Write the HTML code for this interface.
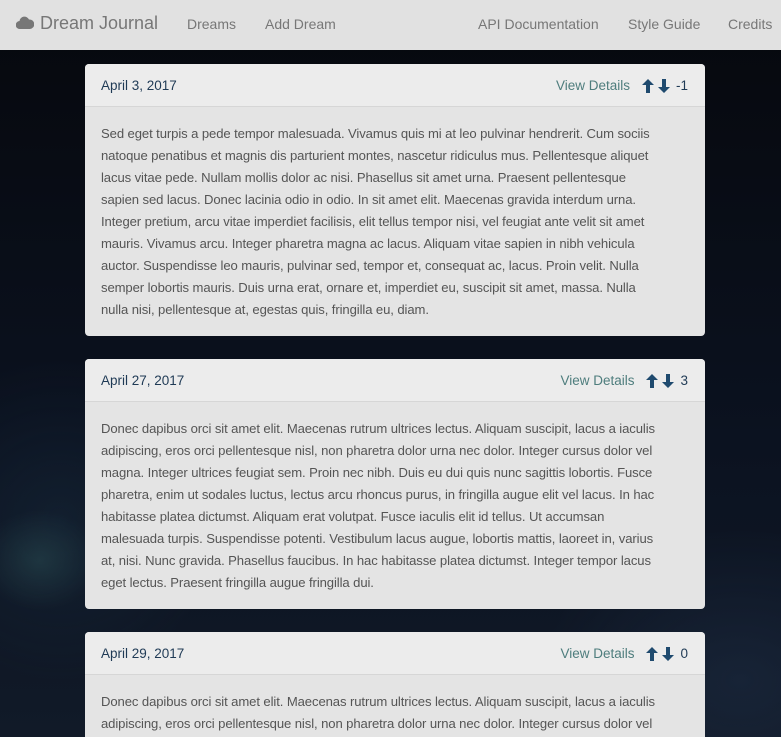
<!DOCTYPE html>
<html><head><meta charset="utf-8"><style>
*{margin:0;padding:0;box-sizing:border-box}
html,body{width:781px;height:737px;overflow:hidden}
body{font-family:"Liberation Sans",sans-serif;
background:radial-gradient(ellipse 60px 50px at 40px 560px,rgba(60,110,110,.3),transparent),
radial-gradient(ellipse 160px 160px at 60px 520px,rgba(30,55,75,.3),transparent),
radial-gradient(ellipse 200px 150px at 740px 680px,rgba(40,60,90,.3),transparent),
linear-gradient(#06080d,#0b1220 60%,#111a28);position:relative}
nav{position:absolute;top:0;left:0;width:781px;height:50px;background:#e1e1e1;color:#777;font-size:14px}
nav span{position:absolute;top:16px}
.brand{font-size:18px;top:13px!important;left:40px}
.card{position:absolute;left:85px;width:620px;background:#e4e4e4;border-radius:4px;overflow:hidden}
.hd{height:43px;background:#ececec;border-bottom:1px solid #d6d6d6;position:relative;font-size:13.5px;color:#1f3a55}
.hd .d{position:absolute;left:16px;top:14px}
.hd .r{position:absolute;right:17px;top:14px;color:#1f3a55;display:flex;align-items:center}
.hd .v{color:#4e7d7d;margin-right:12px}
.bd{padding:16px 16px 14px;font-size:13.1px;line-height:22px;color:#555;white-space:nowrap;letter-spacing:-0.1px}
svg.a{margin-right:6px}
</style></head><body>
<nav>
<svg style="position:absolute;left:16px;top:16px" width="18" height="13" viewBox="0 0 18 13"><path d="M4 13a4 4 0 0 1-.5-8A5 5 0 0 1 13 3.5a4.5 4.5 0 0 1 1 9.5z" fill="#777"/></svg>
<span class="brand">Dream Journal</span>
<span style="left:187px">Dreams</span><span style="left:265px">Add Dream</span>
<span style="left:478px">API Documentation</span><span style="left:628px">Style Guide</span><span style="left:728px">Credits</span>
</nav>
<div class="card" style="top:64px;height:272px"><div class="hd"><span class="d">April 3, 2017</span><span class="r"><span class="v">View Details</span><svg class="a" width="28" height="14" viewBox="0 0 28 14"><path d="M6 0L12 6H8V14H4V6H0z M22 14L28 8H24V0H20V8H16z" fill="#1f4a6e"/></svg>-1</span></div>
<div class="bd">Sed eget turpis a pede tempor malesuada. Vivamus quis mi at leo pulvinar hendrerit. Cum sociis<br>natoque penatibus et magnis dis parturient montes, nascetur ridiculus mus. Pellentesque aliquet<br>lacus vitae pede. Nullam mollis dolor ac nisi. Phasellus sit amet urna. Praesent pellentesque<br>sapien sed lacus. Donec lacinia odio in odio. In sit amet elit. Maecenas gravida interdum urna.<br>Integer pretium, arcu vitae imperdiet facilisis, elit tellus tempor nisi, vel feugiat ante velit sit amet<br>mauris. Vivamus arcu. Integer pharetra magna ac lacus. Aliquam vitae sapien in nibh vehicula<br>auctor. Suspendisse leo mauris, pulvinar sed, tempor et, consequat ac, lacus. Proin velit. Nulla<br>semper lobortis mauris. Duis urna erat, ornare et, imperdiet eu, suscipit sit amet, massa. Nulla<br>nulla nisi, pellentesque at, egestas quis, fringilla eu, diam.</div></div>
<div class="card" style="top:359px;height:250px"><div class="hd"><span class="d">April 27, 2017</span><span class="r"><span class="v">View Details</span><svg class="a" width="28" height="14" viewBox="0 0 28 14"><path d="M6 0L12 6H8V14H4V6H0z M22 14L28 8H24V0H20V8H16z" fill="#1f4a6e"/></svg>3</span></div>
<div class="bd">Donec dapibus orci sit amet elit. Maecenas rutrum ultrices lectus. Aliquam suscipit, lacus a iaculis<br>adipiscing, eros orci pellentesque nisl, non pharetra dolor urna nec dolor. Integer cursus dolor vel<br>magna. Integer ultrices feugiat sem. Proin nec nibh. Duis eu dui quis nunc sagittis lobortis. Fusce<br>pharetra, enim ut sodales luctus, lectus arcu rhoncus purus, in fringilla augue elit vel lacus. In hac<br>habitasse platea dictumst. Aliquam erat volutpat. Fusce iaculis elit id tellus. Ut accumsan<br>malesuada turpis. Suspendisse potenti. Vestibulum lacus augue, lobortis mattis, laoreet in, varius<br>at, nisi. Nunc gravida. Phasellus faucibus. In hac habitasse platea dictumst. Integer tempor lacus<br>eget lectus. Praesent fringilla augue fringilla dui.</div></div>
<div class="card" style="top:632px;height:120px"><div class="hd"><span class="d">April 29, 2017</span><span class="r"><span class="v">View Details</span><svg class="a" width="28" height="14" viewBox="0 0 28 14"><path d="M6 0L12 6H8V14H4V6H0z M22 14L28 8H24V0H20V8H16z" fill="#1f4a6e"/></svg>0</span></div>
<div class="bd">Donec dapibus orci sit amet elit. Maecenas rutrum ultrices lectus. Aliquam suscipit, lacus a iaculis<br>adipiscing, eros orci pellentesque nisl, non pharetra dolor urna nec dolor. Integer cursus dolor vel</div></div>
</body></html>
